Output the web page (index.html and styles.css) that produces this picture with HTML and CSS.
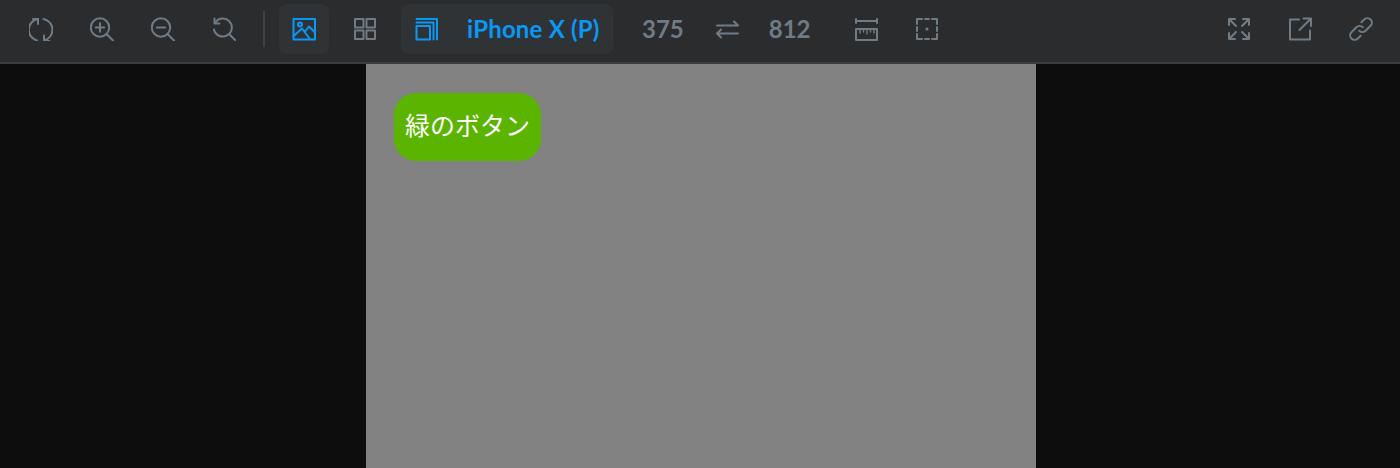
FILE: index.html
```html
<!DOCTYPE html>
<html lang="ja">
<head>
    <meta charset="UTF-8">
    <meta name="viewport" content="width=device-width, initial-scale=1.0">
    <title>Preview</title>
    <link rel="stylesheet" href="styles.css">
</head>
<body>

<div class="toolbar">
    <!-- Rotate and zoom -->
    <button class="tool">
        <svg viewBox="0 0 24 24"><path d="M8 23.500A11 11 0 0 1 9 2"/><path d="M4 2h5v5"/><path d="M14.500 2A11 11 0 0 1 15 23.500"/><path d="M20.500 24H15v-5.500"/></svg>
    </button>
    <button class="tool">
        <svg viewBox="0 0 24 24"><circle cx="10" cy="10.500" r="9.200"/><path d="M16.500 17l6.500 6.500M10 6.300v8.400M5.800 10.500h8.400"/></svg>
    </button>
    <button class="tool">
        <svg viewBox="0 0 24 24"><circle cx="10" cy="10.500" r="9.200"/><path d="M16.500 17l6.500 6.500M5.800 10.500h8.400"/></svg>
    </button>
    <button class="tool">
        <svg viewBox="0 0 24 24"><path d="M3 6A9 9 0 1 1 2 12.500"/><path d="M2.500 1.500v5h5"/><path d="M17 17l6 6"/></svg>
    </button>
    <div class="sep"></div>
    <button class="tool active">
        <svg viewBox="0 0 24 24"><rect x="1.500" y="2" width="21.500" height="20.500"/><circle cx="8" cy="7.500" r="2"/><path d="M1.500 19L10 11.500l7.500 10M13 14.500l4-5 6 6"/></svg>
    </button>
    <button class="tool">
        <svg viewBox="0 0 24 24"><rect x="2" y="2" width="8.500" height="8.500"/><rect x="13.500" y="2" width="8.500" height="8.500"/><rect x="2" y="13.500" width="8.500" height="8.500"/><rect x="13.500" y="13.500" width="8.500" height="8.500"/></svg>
    </button>

    <!-- Device picker -->
    <button class="device">
        <svg viewBox="0 0 24 24"><rect x="1.500" y="9" width="13.500" height="13.500"/><path d="M1.500 5.500h17v17M1.500 2h20.500v20.500"/></svg>
        <span>iPhone X (P)</span>
    </button>

    <div class="size">375</div>
    <button class="swap">
        <svg viewBox="0 0 24 24"><path d="M1 8.500h21M18 4.500l4 4M1 16.500h21M5 12.500l-4 4 4 4"/></svg>
    </button>
    <div class="size">812</div>

    <button class="tool ruler">
        <svg viewBox="0 0 24 24"><path d="M2 4h21M2 2v4M23 2v4"/><rect x="2" y="12" width="21" height="11"/><path class="ticks" d="M6 12v4M9.500 12v3M13 12v5M16.500 12v3M20 12v4"/></svg>
    </button>
    <button class="tool">
        <svg viewBox="0 0 24 24"><path d="M2 7V2h5M10 2h4M17 2h5v5M22 10v4M22 17v5h-5M14 22h-4M7 22H2v-5M2 14v-4"/><circle class="dot" cx="12" cy="12" r="1.600"/></svg>
    </button>

    <!-- Right side -->
    <div class="right">
        <button class="tool">
            <svg viewBox="0 0 24 24"><path d="M2 2l7 7M2 8V2h6M22 2l-7 7M16 2h6v6M2 22l7-7M2 16v6h6M22 22l-7-7M22 16v6h-6"/></svg>
        </button>
        <button class="tool">
            <svg viewBox="0 0 24 24"><path d="M11 2.500H2v20h20v-9"/><path d="M11.500 13L23 1.500M15.500 1.500H23V9"/></svg>
        </button>
        <button class="tool">
            <svg viewBox="0 0 24 24"><g transform="rotate(-45 12 12)"><path d="M14.500 12a4.500 4.500 0 0 0-4.500-4.500H3a4.500 4.500 0 0 0 0 9h4"/><path d="M9.500 12a4.500 4.500 0 0 0 4.500 4.500h7a4.500 4.500 0 0 0 0-9h-4"/></g></svg>
        </button>
    </div>
</div>

<div class="stage">
    <div class="screen">
        <button class="green-btn">緑のボタン</button>
    </div>
</div>

</body>
</html>
```

FILE: styles.css
```css
* {
    box-sizing: border-box;
}
html, body {
    height: 100%;
}
body {
    margin: 0;
    display: flex;
    flex-direction: column;
    overflow: hidden;
    background-color: #0d0d0d;
    font-family: "Lato", "Noto Sans", sans-serif;
}
button {
    background: none;
    border: none;
    padding: 0;
    font-family: inherit;
    cursor: pointer;
}
svg {
    width: 24px;
    height: 24px;
    fill: none;
    stroke: #6f7c85;
    stroke-width: 2;
    stroke-linecap: round;
    stroke-linejoin: round;
}
.toolbar {
    display: flex;
    align-items: center;
    gap: 11px;
    flex: none;
    height: 64px;
    padding: 0 14px 5px 16px;
    background-color: #2b2c2e;
    border-bottom: 2px solid #3c3d3f;
}
.tool {
    display: flex;
    align-items: center;
    justify-content: center;
    width: 50px;
    height: 50px;
    border-radius: 7px;
}
.active {
    background-color: #303336;
}
.active svg, .device svg {
    stroke: #0a98f5;
}
.sep {
    width: 2px;
    height: 36px;
    margin: 0 3px;
    background-color: #3f4144;
}
.device {
    display: flex;
    align-items: center;
    width: 212px;
    height: 50px;
    padding-left: 14px;
    border-radius: 7px;
    background-color: #303336;
    color: #0a98f5;
    font-size: 24px;
    font-weight: 700;
}
.device span {
    margin-left: 28px;
    letter-spacing: 0.2px;
    white-space: nowrap;
}
.size {
    margin-left: 18px;
    color: #6f7c85;
    font-size: 24px;
    font-weight: 700;
}
.swap {
    display: flex;
    margin-left: 21px;
}
.swap + .size {
    margin-left: 18px;
}
.ruler {
    margin-left: 19px;
}
.ticks {
    stroke-width: 1.4;
}
.dot {
    fill: #6f7c85;
    stroke: none;
}
.right {
    display: flex;
    gap: 11px;
    margin-left: auto;
}
.stage {
    flex: 1;
    display: flex;
    justify-content: center;
    padding-left: 2px;
}
.screen {
    width: 670px;
    padding: 29px 28px;
    background-color: #828282;
}
.green-btn {
    width: 147px;
    height: 68px;
    padding-bottom: 6px;
    border-radius: 22px;
    background-color: #5ab400;
    color: #fff;
    font-family: "Noto Sans CJK JP", sans-serif;
    font-size: 25px;
    white-space: nowrap;
}
```
